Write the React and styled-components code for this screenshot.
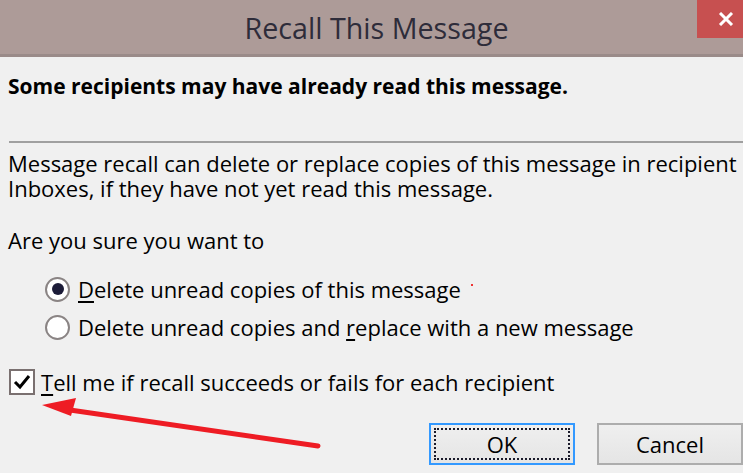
import React from "react";
import styled, { createGlobalStyle } from "styled-components";

const GlobalStyle = createGlobalStyle`
  html, body {
    margin: 0;
    padding: 0;
    background: #f0f0f0;
  }
  body {
    font-family: "Open Sans", "Liberation Sans", sans-serif;
    color: #000;
  }
`;

const Window = styled.div`
  position: relative;
  width: 743px;
  height: 473px;
  overflow: hidden;
  background: #f0f0f0;
`;

const TitleBar = styled.div`
  height: 54px;
  background: #ad9b98;
  border-bottom: 3px solid #9a8b89;
  display: grid;
  grid-template-columns: 46px 1fr 46px;
  align-items: start;
`;

const Title = styled.div`
  grid-column: 2;
  height: 54px;
  display: flex;
  align-items: center;
  justify-content: center;
  padding-left: 10px;
  font-size: 28.7px;
  color: #2e2c3a;
`;

const CloseButton = styled.div`
  grid-column: 3;
  width: 46px;
  height: 38px;
  background: #c75050;
  display: flex;
  align-items: center;
  justify-content: center;
  padding-left: 12px;
  box-sizing: border-box;
`;

const Content = styled.div`
  padding: 0 8px;
  font-size: 22px;
  line-height: 25px;
`;

const Headline = styled.div`
  margin-top: 17px;
  font-size: 21px;
  font-weight: 700;
`;

const Separator = styled.div`
  height: 2px;
  background: #a0a0a0;
  margin: 42px -8px 0 1px;
`;

const Paragraph = styled.p`
  margin: 8px 0 0;
  white-space: nowrap;
`;

const Question = styled.p`
  margin: 27px 0 0;
`;

const Options = styled.div`
  margin-top: 17px;
  padding-left: 37px;
`;

const Row = styled.label`
  height: 38px;
  display: flex;
  align-items: center;
  gap: ${(p) => p.$gap || 8}px;
`;

const Radio = styled.span`
  width: 25px;
  height: 25px;
  box-sizing: border-box;
  border-radius: 50%;
  border: 2px solid #8a8484;
  background: #fff;
  display: flex;
  align-items: center;
  justify-content: center;

  &::after {
    content: "";
    display: ${(p) => (p.$checked ? "block" : "none")};
    width: 12px;
    height: 12px;
    border-radius: 50%;
    background: #1c1c38;
  }
`;

const Checkbox = styled.span`
  width: 26px;
  height: 26px;
  box-sizing: border-box;
  border: 2px solid #7a7070;
  background: #fff;
  margin-left: 1px;
  display: flex;
  align-items: center;
  justify-content: center;
`;

const Key = styled.u`
  text-decoration-thickness: 2px;
  text-underline-offset: 3px;
`;

const Mark = styled.span`
  display: inline-block;
  width: 2px;
  height: 2px;
  background: #e33;
  margin: 0 0 12px 10px;
`;

const CheckRow = styled(Row)`
  margin-top: 17px;
`;

const ButtonRow = styled.div`
  margin-top: 22px;
  margin-right: -8px;
  display: flex;
  justify-content: flex-end;
  gap: 22px;
`;

const Button = styled.button`
  width: 146px;
  height: 42px;
  box-sizing: border-box;
  border: 2px solid ${(p) => (p.$primary ? "#3399ff" : "#adadad")};
  background: linear-gradient(#efefef, #e5e5e5);
  font-family: "Open Sans", "Liberation Sans", sans-serif;
  font-size: 22px;
  color: #000;
  padding: 0;
  position: relative;
  text-align: center;

  ${(p) =>
    p.$primary &&
    `
    &::before {
      content: "";
      position: absolute;
      inset: 3px;
      border: 2px dotted #1a1a2a;
    }
  `}
`;

const Arrow = styled.svg`
  position: absolute;
  left: 0;
  top: 0;
  pointer-events: none;
`;

export default function App() {
  return (
    <>
      <GlobalStyle />
      <Window>
        <TitleBar>
          <Title>Recall This Message</Title>
          <CloseButton>
            <svg width="16" height="14" viewBox="0 0 16 14">
              <path d="M2 1 L14 13 M14 1 L2 13" stroke="#fff" strokeWidth="3" />
            </svg>
          </CloseButton>
        </TitleBar>
        <Content>
          <Headline>Some recipients may have already read this message.</Headline>
          <Separator />
          <Paragraph>
            Message recall can delete or replace copies of this message in recipient
            <br />
            Inboxes, if they have not yet read this message.
          </Paragraph>
          <Question>Are you sure you want to</Question>
          <Options>
            <Row>
              <Radio $checked />
              <span>
                <Key>D</Key>elete unread copies of this message
                <Mark />
              </span>
            </Row>
            <Row>
              <Radio />
              <span>
                Delete unread copies and <Key>r</Key>eplace with a new message
              </span>
            </Row>
          </Options>
          <CheckRow $gap={6}>
            <Checkbox>
              <svg width="18" height="16" viewBox="0 0 18 16">
                <path d="M2 8 L7 13 L16 2" fill="none" stroke="#000" strokeWidth="3" />
              </svg>
            </Checkbox>
            <span>
              <Key>T</Key>ell me if recall succeeds or fails for each recipient
            </span>
          </CheckRow>
          <ButtonRow>
            <Button $primary>OK</Button>
            <Button>Cancel</Button>
          </ButtonRow>
        </Content>
        <Arrow width="743" height="473" viewBox="0 0 743 473">
          <path d="M318 446 L70 410" stroke="#ee1c24" strokeWidth="5" strokeLinecap="round" />
          <path d="M42 405 L76 398 L71 416 Z" fill="#ee1c24" />
        </Arrow>
      </Window>
    </>
  );
}
